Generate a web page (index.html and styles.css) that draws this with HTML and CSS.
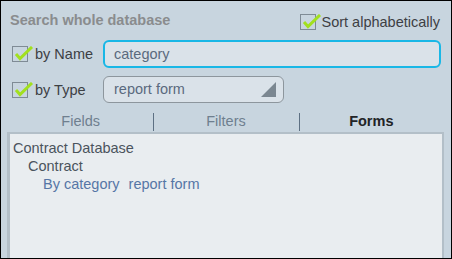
FILE: index.html
```html
<!DOCTYPE html>
<html>
<head>
<meta charset="utf-8">
<link rel="stylesheet" href="styles.css">
</head>
<body>
<div class="frame">
  <div class="header">
    <div class="title">Search whole database</div>
    <label class="check sort">
      <span class="box"><svg width="21" height="16" viewBox="0 0 21 16"><path d="M3 8 L7 12.5 L19 1" fill="none" stroke="#a2e01e" stroke-width="3"/></svg></span>
      <span>Sort alphabetically</span>
    </label>
  </div>
  <div class="row">
    <label class="check lbl">
      <span class="box"><svg width="21" height="16" viewBox="0 0 21 16"><path d="M3 8 L7 12.5 L19 1" fill="none" stroke="#a2e01e" stroke-width="3"/></svg></span>
      <span>by Name</span>
    </label>
    <div class="input">category</div>
  </div>
  <div class="row row2">
    <label class="check lbl">
      <span class="box"><svg width="21" height="16" viewBox="0 0 21 16"><path d="M3 8 L7 12.5 L19 1" fill="none" stroke="#a2e01e" stroke-width="3"/></svg></span>
      <span>by Type</span>
    </label>
    <div class="select">report form
      <svg class="tri" width="16" height="16" viewBox="0 0 16 16"><path d="M15 0 L15 15 L0 15 Z" fill="#7b8791"/></svg>
    </div>
  </div>
  <div class="tabs">
    <div class="tab">Fields</div>
    <div class="tab sep">Filters</div>
    <div class="tab sep active">Forms</div>
  </div>
  <div class="panel">
    <div class="l0">Contract Database</div>
    <div class="l1">Contract</div>
    <div class="l2"><span>By category</span><span class="gap">report form</span></div>
  </div>
</div>
</body>
</html>
```
FILE: styles.css
```css
html, body { margin: 0; padding: 0; }
body { width: 452px; height: 259px; overflow: hidden; font-family: "Liberation Sans", Arial, sans-serif; font-size: 14.5px; }
.frame {
  box-sizing: border-box; width: 452px; height: 259px; border: 1px solid #000;
  background: #c8d5df; display: flex; flex-direction: column;
}
.header { display: flex; justify-content: space-between; align-items: flex-start; height: 37px; padding: 0 11px 0 9px; }
.title { font-weight: bold; color: #8a8c8e; margin-top: 11px; font-size: 14.5px; }
.check { display: flex; align-items: center; color: #3d4044; }
.sort { margin-top: 13px; }
.box { position: relative; width: 16px; height: 16px; box-sizing: border-box; border: 1px solid #7f8b95; margin-right: 6px; flex: none; }
.box svg { position: absolute; left: 0; top: -1px; }
.row { display: flex; align-items: center; height: 28px; margin-top: 2px; padding-left: 11px; }
.row2 { margin-top: 8px; height: 27px; }
.lbl { width: 91px; }
.lbl .box { margin-right: 7px; }
.input {
  box-sizing: border-box; width: 338px; height: 28px; border: 2px solid #19b7e6; border-radius: 6px;
  background: #dae2e9; color: #5a6a7e; padding-left: 9px; line-height: 24px;
}
.select {
  position: relative; box-sizing: border-box; width: 181px; height: 27px; border: 1px solid #8d969d; border-radius: 6px;
  background: #dae2e9; color: #5a6a7e; padding-left: 10px; line-height: 25px;
}
.tri { position: absolute; right: 6px; top: 5px; }
.tabs { display: flex; height: 28px; margin: 1px 7px 0 7px; }
.tab { flex: 1; text-align: center; color: #6f7f8f; line-height: 20px; padding-top: 7px; position: relative; }
.sep::before { content: ""; position: absolute; left: 0; top: 9px; height: 18px; width: 1px; background: #5d7083; }
.active { font-weight: bold; color: #222427; }
.panel {
  flex: 1; margin: 0 7px 0 6px; background: #e9edf0; border: 2px solid #b3bfc8; border-left-width: 3px; border-bottom: none;
  padding: 5px 0 0 3px; color: #4b545d; line-height: 18px; font-size: 14.5px;
}
.l1 { padding-left: 15px; }
.l2 { padding-left: 30px; color: #5676a6; }
.gap { margin-left: 9px; }
```
